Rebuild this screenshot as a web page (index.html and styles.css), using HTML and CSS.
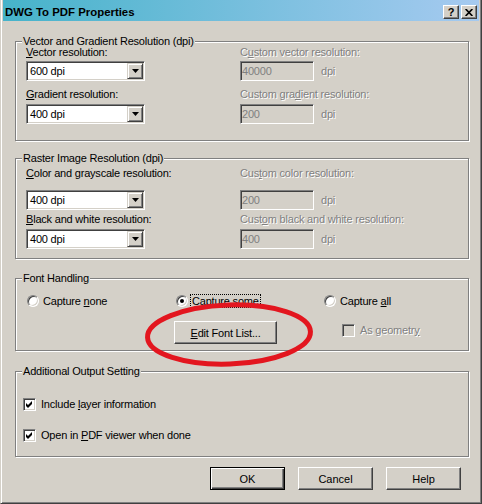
FILE: index.html
```html
<!DOCTYPE html>
<html lang="en">
<head>
  <meta charset="UTF-8" />
  <title>DWG To PDF Properties</title>
  <link rel="stylesheet" href="styles.css">
</head>
<body>
  <div class="window">
    <div class="titlebar">
      <span class="title">DWG To PDF Properties</span>
      <span class="cap-btn help-q">?</span>
      <span class="cap-btn">
        <svg width="8" height="7" viewBox="0 0 8 7"><path d="M0.6 0 L7.4 7 M7.4 0 L0.6 7" stroke="#000" stroke-width="1.7" fill="none"/></svg>
      </span>
    </div>

    <div class="client">
      <div class="group vector">
        <div class="group-title">Vector and Gradient Resolution (dpi)</div>
        <div class="res-grid">
          <div class="field-label"><u>V</u>ector resolution:</div>
          <div class="field-label disabled">C<u>u</u>stom vector resolution:</div>

          <div class="combo">
            <span class="combo-value">600 dpi</span>
            <span class="combo-arrow"><svg width="7" height="4" viewBox="0 0 7 4"><path d="M0 0h7L3.5 4z"/></svg></span>
          </div>
          <div class="custom"><span class="edit">40000</span><span class="disabled">dpi</span></div>

          <div class="field-label"><u>G</u>radient resolution:</div>
          <div class="field-label disabled">Custom gra<u>d</u>ient resolution:</div>

          <div class="combo">
            <span class="combo-value">400 dpi</span>
            <span class="combo-arrow"><svg width="7" height="4" viewBox="0 0 7 4"><path d="M0 0h7L3.5 4z"/></svg></span>
          </div>
          <div class="custom"><span class="edit">200</span><span class="disabled">dpi</span></div>
        </div>
      </div>

      <div class="group raster">
        <div class="group-title">Raster Image Resolution (dpi)</div>
        <div class="res-grid">
          <div class="field-label"><u>C</u>olor and grayscale resolution:</div>
          <div class="field-label disabled">Cus<u>t</u>om color resolution:</div>

          <div class="combo">
            <span class="combo-value">400 dpi</span>
            <span class="combo-arrow"><svg width="7" height="4" viewBox="0 0 7 4"><path d="M0 0h7L3.5 4z"/></svg></span>
          </div>
          <div class="custom"><span class="edit">200</span><span class="disabled">dpi</span></div>

          <div class="field-label"><u>B</u>lack and white resolution:</div>
          <div class="field-label disabled">Cust<u>o</u>m black and white resolution:</div>

          <div class="combo">
            <span class="combo-value">400 dpi</span>
            <span class="combo-arrow"><svg width="7" height="4" viewBox="0 0 7 4"><path d="M0 0h7L3.5 4z"/></svg></span>
          </div>
          <div class="custom"><span class="edit">400</span><span class="disabled">dpi</span></div>
        </div>
      </div>

      <div class="group fonts">
        <div class="group-title">Font Handling</div>
        <div class="font-grid">
          <div class="option"><span class="radio"></span><span class="opt-label">Capture <u>n</u>one</span></div>
          <div class="option"><span class="radio checked"></span><span class="opt-label focus">Capture some</span></div>
          <div class="option"><span class="radio"></span><span class="opt-label">Capture <u>a</u>ll</span></div>

          <div></div>
          <div class="btn font-list"><span><u>E</u>dit Font List...</span></div>
          <div class="option geom">
            <span class="checkbox off"></span>
            <span class="check-label disabled">As geometr<u>y</u></span>
          </div>
        </div>
      </div>

      <div class="group output">
        <div class="group-title">Additional Output Setting</div>
        <div class="output-list">
          <div class="option">
            <span class="checkbox"><svg width="7" height="7" viewBox="0 0 7 7"><path d="M0 2L2 4L6 0V3L2 7L0 5Z"/></svg></span>
            <span class="check-label">Include <u>l</u>ayer information</span>
          </div>
          <div class="option">
            <span class="checkbox"><svg width="7" height="7" viewBox="0 0 7 7"><path d="M0 2L2 4L6 0V3L2 7L0 5Z"/></svg></span>
            <span class="check-label">Open in <u>P</u>DF viewer when done</span>
          </div>
        </div>
      </div>

      <div class="dialog-buttons">
        <div class="btn default">OK</div>
        <div class="btn">Cancel</div>
        <div class="btn">Help</div>
      </div>
    </div>

    <!-- hand drawn highlight over the dialog -->
    <svg class="annotation" width="176" height="76" viewBox="0 0 176 76">
      <ellipse cx="87" cy="37.5" rx="81.5" ry="29.5" transform="rotate(-2 87 37.5)" fill="none" stroke="#e3161f" stroke-width="5"/>
    </svg>
  </div>
</body>
</html>
```

FILE: styles.css
```css
* {
  box-sizing: border-box;
}
body {
  margin: 0;
  background: #d4d0c8;
  font-family: "Liberation Sans", Arial, sans-serif;
  font-size: 11px;
  color: #000;
}
u {
  text-decoration: underline;
  text-underline-offset: 1px;
}
.window {
  position: relative;
  width: 482px;
  height: 504px;
  background: #d4d0c8;
  border: 1px solid;
  border-top: 0;
  border-color: #d4d0c8 #404040 #404040 #d4d0c8;
  box-shadow: inset 1px 0 #fff, inset -1px -1px #808080;
  padding: 0 2px 2px;
}
.titlebar {
  display: flex;
  align-items: center;
  height: 21px;
  padding: 5px 2px 2px 2px;
  background: linear-gradient(to right, #46b3ca, #a6caf0);
}
.title {
  flex: 1;
  font-weight: bold;
  font-size: 11.4px;
  line-height: 14px;
}
.cap-btn {
  display: flex;
  align-items: center;
  justify-content: center;
  width: 16px;
  height: 14px;
  background: #d4d0c8;
  border: 1px solid;
  border-color: #fff #404040 #404040 #fff;
  box-shadow: inset -1px -1px #808080;
}
.cap-btn + .cap-btn {
  margin-left: 2px;
}
.help-q {
  font-weight: bold;
  font-size: 11px;
  line-height: 10px;
  padding-bottom: 1px;
}
.client {
  padding: 20px 10px 0 12px;
  letter-spacing: -0.2px;
}
.group {
  border: 1px solid #808080;
  box-shadow: inset 1px 1px #fff, 1px 1px #fff;
}
.group-title {
  display: table;
  margin: -7px 0 -6px 6px;
  padding: 0 1px;
  background: #d4d0c8;
  line-height: 13px;
}
.raster {
  margin-top: 17px;
}
.fonts {
  margin-top: 19px;
}
.output {
  margin-top: 20px;
}
.disabled {
  color: #808080;
  text-shadow: 1px 1px 0 #fff;
}
.res-grid {
  display: grid;
  grid-template-columns: 214px 1fr;
  align-items: start;
  padding-left: 10px;
}
.vector .res-grid {
  grid-template-rows: 15px 27px 16px 20px;
  padding-top: 4px;
  padding-bottom: 16px;
}
.raster .res-grid {
  grid-template-rows: 23px 23px 16px 20px;
  padding-top: 8px;
  padding-bottom: 9px;
}
.field-label {
  line-height: 13px;
  white-space: nowrap;
}
.combo {
  display: flex;
  width: 119px;
  height: 20px;
  padding: 1px;
  background: #fff;
  border: 1px solid;
  border-color: #808080 #fff #fff #808080;
  box-shadow: inset 1px 1px #404040, inset -1px -1px #d4d0c8;
}
.combo-value {
  flex: 1;
  line-height: 16px;
  padding-left: 2px;
}
.combo-arrow {
  display: flex;
  align-items: center;
  justify-content: center;
  width: 16px;
  height: 16px;
  background: #d4d0c8;
  border: 1px solid;
  border-color: #d4d0c8 #404040 #404040 #d4d0c8;
  box-shadow: inset 1px 1px #fff, inset -1px -1px #808080;
}
.custom {
  display: flex;
  align-items: center;
  gap: 7px;
}
.edit {
  width: 74px;
  height: 20px;
  padding: 1px;
  line-height: 16px;
  color: #808080;
  background: #d4d0c8;
  border: 1px solid;
  border-color: #808080 #fff #fff #808080;
  box-shadow: inset 1px 1px #404040, inset -1px -1px #d4d0c8;
}
.font-grid {
  display: grid;
  grid-template-columns: 149px 148px 1fr;
  grid-template-rows: 14px 23px;
  row-gap: 13px;
  padding: 15px 0 6px 11px;
}
.option {
  display: flex;
  align-items: center;
}
.radio {
  position: relative;
  flex: none;
  width: 12px;
  height: 12px;
  border-radius: 50%;
  background: #fff;
  border: 1px solid;
  border-color: #808080 #fff #fff #808080;
  box-shadow: inset 1px 1px #404040, inset -1px -1px #d4d0c8;
}
.radio.checked::after {
  content: "";
  position: absolute;
  left: 3px;
  top: 3px;
  width: 4px;
  height: 4px;
  border-radius: 50%;
  background: #000;
}
.opt-label {
  margin-left: 2px;
  padding: 0 1px;
  border: 1px solid transparent;
  line-height: 12px;
  white-space: nowrap;
}
.opt-label.focus {
  border: 1px dotted #000;
}
.geom {
  align-self: start;
  margin: 3px 0 0 18px;
}
.checkbox {
  display: flex;
  flex: none;
  align-items: center;
  justify-content: center;
  width: 13px;
  height: 13px;
  background: #fff;
  border: 1px solid;
  border-color: #808080 #fff #fff #808080;
  box-shadow: inset 1px 1px #404040, inset -1px -1px #d4d0c8;
}
.checkbox.off {
  background: #d4d0c8;
}
.check-label {
  margin-left: 5px;
  line-height: 13px;
  white-space: nowrap;
}
.output-list {
  display: flex;
  flex-direction: column;
  gap: 18px;
  padding: 26px 0 14px 7px;
}
.btn {
  display: flex;
  align-items: center;
  justify-content: center;
  width: 75px;
  height: 23px;
  background: #d4d0c8;
  border: 1px solid;
  border-color: #fff #404040 #404040 #fff;
  box-shadow: inset -1px -1px #808080;
  letter-spacing: 0;
}
.btn.default {
  border-color: #000;
  box-shadow: inset 1px 1px #fff, inset -1px -1px #404040, inset -2px -2px #808080;
}
.font-list {
  width: 103px;
  margin-left: -2px;
  letter-spacing: -0.2px;
}
.dialog-buttons {
  display: flex;
  justify-content: flex-end;
  gap: 13px;
  margin-top: 10px;
  padding-right: 8px;
}
.annotation {
  position: absolute;
  left: 141px;
  top: 297px;
}
.combo-arrow path,
.checkbox path {
  fill: #000;
}
```
